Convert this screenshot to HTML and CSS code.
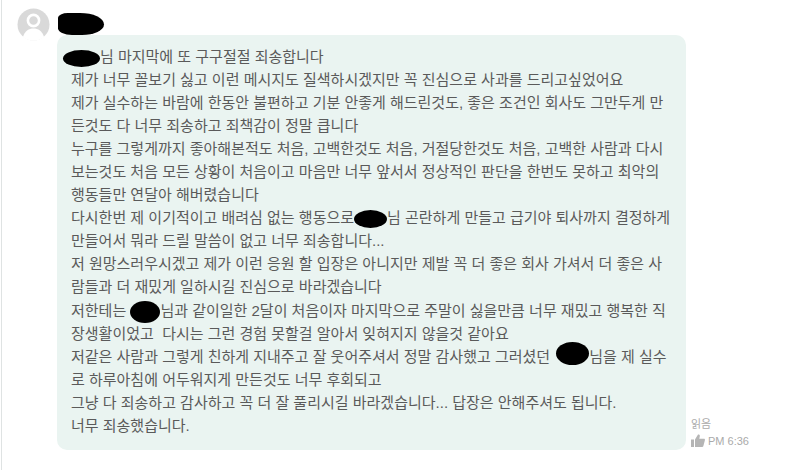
FILE: index.html
```html
<!DOCTYPE html>
<html>
<head>
    <title>Message</title>
    <link rel="stylesheet" href="styles.css">
</head>
<body>
    <div class="chat">
        <div class="avatar">
            <svg width="33" height="33" viewBox="0 0 33 33">
                <circle cx="16.5" cy="16.5" r="16" fill="#d9d9d9"/>
                <circle cx="16.5" cy="12.5" r="5.6" fill="none" stroke="#fff" stroke-width="2.6"/>
                <path d="M6 29c1.500-6 6-8.500 10.500-8.500S25.500 23 27 29c-3 2.500-6.500 3.800-10.500 3.800S9 31.500 6 29z" fill="#fff"/>
            </svg>
        </div>
        <div class="content">
            <div class="name"><span class="blob blob-name"></span></div>
            <div class="row">
                <div class="bubble">
                    <div class="line"><span class="blob blob-a"></span>님 마지막에 또 구구절절 죄송합니다</div>
                    <div class="line">제가 너무 꼴보기 싫고 이런 메시지도 질색하시겠지만 꼭 진심으로 사과를 드리고싶었어요</div>
                    <div class="line">제가 실수하는 바람에 한동안 불편하고 기분 안좋게 해드린것도, 좋은 조건인 회사도 그만두게 만</div>
                    <div class="line">든것도 다 너무 죄송하고 죄책감이 정말 큽니다</div>
                    <div class="line">누구를 그렇게까지 좋아해본적도 처음, 고백한것도 처음, 거절당한것도 처음, 고백한 사람과 다시</div>
                    <div class="line">보는것도 처음 모든 상황이 처음이고 마음만 너무 앞서서 정상적인 판단을 한번도 못하고 최악의</div>
                    <div class="line">행동들만 연달아 해버렸습니다</div>
                    <div class="line">다시한번 제 이기적이고 배려심 없는 행동으로<span class="blob blob-b"></span>님 곤란하게 만들고 급기야 퇴사까지 결정하게</div>
                    <div class="line">만들어서 뭐라 드릴 말씀이 없고 너무 죄송합니다...</div>
                    <div class="line">저 원망스러우시겠고 제가 이런 응원 할 입장은 아니지만 제발 꼭 더 좋은 회사 가셔서 더 좋은 사</div>
                    <div class="line">람들과 더 재밌게 일하시길 진심으로 바라겠습니다</div>
                    <div class="line">저한테는 <span class="blob blob-c"></span>님과 같이일한 2달이 처음이자 마지막으로 주말이 싫을만큼 너무 재밌고 행복한 직</div>
                    <div class="line">장생활이었고 &nbsp;다시는 그런 경험 못할걸 알아서 잊혀지지 않을것 같아요</div>
                    <div class="line">저같은 사람과 그렇게 친하게 지내주고 잘 웃어주셔서 정말 감사했고 그러셨던 <span class="blob blob-d"></span>님을 제 실수</div>
                    <div class="line">로 하루아침에 어두워지게 만든것도 너무 후회되고</div>
                    <div class="line">그냥 다 죄송하고 감사하고 꼭 더 잘 풀리시길 바라겠습니다... 답장은 안해주셔도 됩니다.</div>
                    <div class="line">너무 죄송했습니다.</div>
                </div>
                <div class="meta">
                    <div class="read">읽음</div>
                    <div class="time">
                        <svg width="14" height="13" viewBox="0 0 14 13">
                            <rect x="0" y="5.500" width="3" height="7.500" fill="#b5b5b5"/>
                            <path d="M4 5.500 7 0.500c1.300-.4 2 .5 1.800 1.700L8.300 4.800H13c.8 0 1.100.8.900 1.400l-1.600 6c-.2.500-.6.800-1.100.8H4z" fill="#b5b5b5"/>
                        </svg>
                        <span>PM 6:36</span>
                    </div>
                </div>
            </div>
        </div>
    </div>
</body>
</html>
```

FILE: styles.css
```css
body {
    margin: 0 0 0 1px;
    background: #fff;
    font-family: "Liberation Sans", "Noto Sans CJK KR", sans-serif;
    border-left: 1px solid #dfe3e3;
    height: 470px;
    box-sizing: border-box;
    overflow: hidden;
}

.chat {
    display: flex;
    padding: 8px 0 0 15px;
}

.avatar {
    width: 33px;
    height: 33px;
    margin-right: 7px;
}

.name {
    height: 27px;
    box-sizing: border-box;
    padding: 5px 0 0 1px;
}

.row {
    display: flex;
    align-items: flex-end;
}

.bubble {
    width: 629px;
    height: 415px;
    box-sizing: border-box;
    padding: 10px 0 0 14px;
    background: #eaf4f1;
    border-radius: 10px;
    color: #5a5a5a;
    font-size: 15px;
}

.line {
    height: 23.06px;
    line-height: 23px;
    white-space: nowrap;
}

.blob {
    display: inline-block;
    margin-top: -6px;
    margin-bottom: -6px;
    background: #000;
    border-radius: 50%;
    vertical-align: middle;
}

.blob-name {
    display: block;
    width: 46px;
    height: 22px;
    margin: 0;
    border-radius: 25% 60% 55% 35%;
}

.blob-a {
    width: 37px;
    height: 17px;
    margin-left: -8px;
}

.blob-b {
    width: 33px;
    height: 18px;
}

.blob-c {
    width: 30px;
    height: 22px;
}

.blob-d {
    width: 33px;
    height: 23px;
    margin-top: -10px;
    margin-bottom: -2px;
    margin-left: 2px;
}

.meta {
    margin: 0 0 3px 5px;
    font-size: 11px;
    color: #aaa;
}

.read {
    margin-bottom: 3px;
}

.time {
    display: flex;
    align-items: center;
    gap: 3px;
}
```
